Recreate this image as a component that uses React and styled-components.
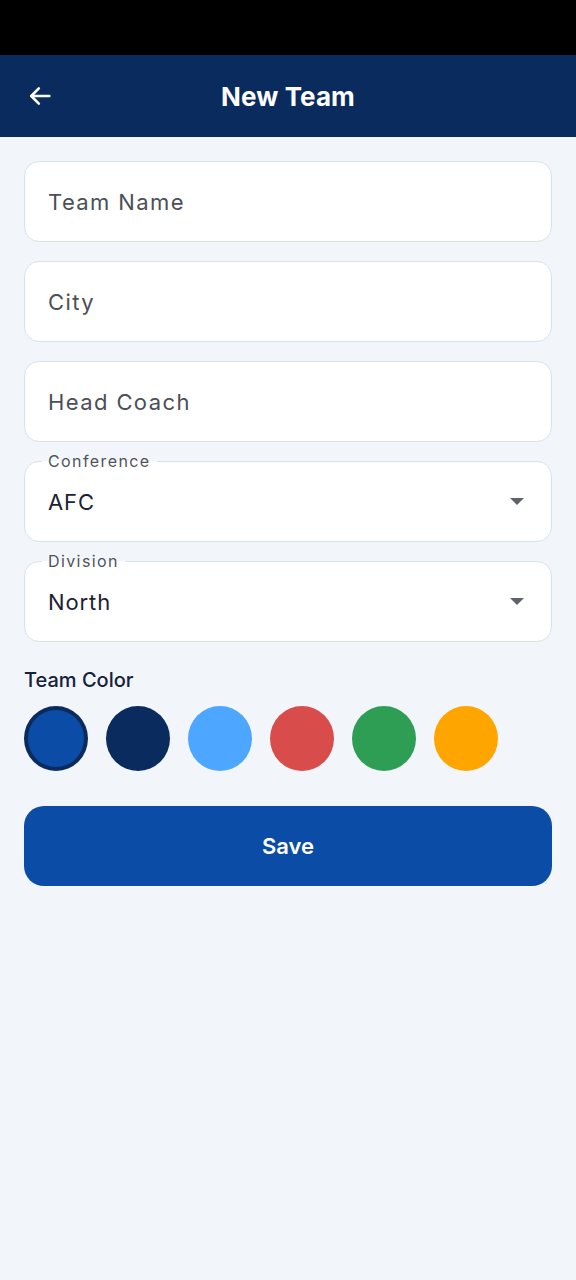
import React, { useState } from "react";
import styled, { createGlobalStyle } from "styled-components";

const GlobalStyle = createGlobalStyle`
  html, body {
    margin: 0;
    padding: 0;
    background: #f2f6fb;
  }
  * {
    box-sizing: border-box;
  }
`;

const Screen = styled.div`
  width: 576px;
  min-height: 1280px;
  background: #f2f6fb;
  font-family: Inter, "Noto Sans", sans-serif;
`;

const StatusBar = styled.div`
  height: 55px;
  background: #000000;
`;

const AppBar = styled.header`
  height: 82px;
  background: #0a2b5e;
  display: grid;
  grid-template-columns: 82px 1fr 82px;
  align-items: center;
`;

const BackButton = styled.button`
  border: none;
  background: none;
  padding: 0 0 0 26px;
  height: 100%;
  display: flex;
  align-items: center;
  color: #ffffff;
  cursor: pointer;
`;

const Title = styled.h1`
  margin: 0;
  text-align: center;
  color: #ffffff;
  font-size: 26px;
  font-weight: 700;
  letter-spacing: 0.1px;
`;

const Form = styled.div`
  padding: 24px 24px 0;
  display: flex;
  flex-direction: column;
  gap: 19px;
`;

const Field = styled.div`
  position: relative;
  height: 81px;
  background: #ffffff;
  border: 1.5px solid #d8e2ec;
  border-radius: 15px;
  display: flex;
  align-items: center;
  padding: 0 24px 0 23px;
`;

const FieldText = styled.span`
  flex: 1;
  font-size: 22px;
  letter-spacing: ${(p) => (p.$placeholder ? "1.4px" : "0.9px")};
  color: ${(p) => (p.$placeholder ? "#4b4f57" : "#1b2233")};
`;

/* floating label sitting on the outline notch */
const FloatLabel = styled.span`
  position: absolute;
  top: -11px;
  left: 17px;
  padding: 0 6px;
  font-size: 16px;
  line-height: 20px;
  letter-spacing: 1.4px;
  color: #4f545c;
  background: linear-gradient(to bottom, #f2f6fb 50%, #ffffff 50%);
`;

const Caret = styled.span`
  width: 0;
  height: 0;
  border-left: 7px solid transparent;
  border-right: 7px solid transparent;
  border-top: 7px solid #5f6368;
  margin-right: 3px;
`;

const SectionLabel = styled.div`
  margin-top: 7px;
  font-size: 20px;
  font-weight: 500;
  color: #16213a;
`;

const Swatches = styled.div`
  display: flex;
  gap: 18px;
  margin-top: -5px;
`;

const Swatch = styled.button`
  width: 64px;
  height: 65px;
  border-radius: 50%;
  padding: 0;
  background: ${(p) => p.$color};
  border: ${(p) => (p.$selected ? "4px solid #0a2b5e" : "none")};
  cursor: pointer;
`;

const SaveButton = styled.button`
  margin-top: 16px;
  height: 80px;
  border: none;
  border-radius: 20px;
  background: #0b4ca6;
  color: #ffffff;
  font-family: Inter, "Noto Sans", sans-serif;
  font-size: 22px;
  font-weight: 600;
  cursor: pointer;
`;

const ArrowLeft = () => (
  <svg width="28" height="28" viewBox="0 0 24 24" fill="none" stroke="currentColor" strokeWidth="2.2" strokeLinecap="round" strokeLinejoin="round">
    <path d="M20 12H4.5" />
    <path d="M11 5.5L4.5 12L11 18.5" />
  </svg>
);

const colors = ["#0b4ca6", "#0a2b5e", "#4da6ff", "#d94c4c", "#2e9e55", "#ffa500"];

export default function App() {
  const [selected, setSelected] = useState(0);

  return (
    <Screen>
      <GlobalStyle />
      <StatusBar />
      <AppBar>
        <BackButton aria-label="Back">
          <ArrowLeft />
        </BackButton>
        <Title>New Team</Title>
        <span />
      </AppBar>
      <Form>
        <Field>
          <FieldText $placeholder>Team Name</FieldText>
        </Field>
        <Field>
          <FieldText $placeholder>City</FieldText>
        </Field>
        <Field>
          <FieldText $placeholder>Head Coach</FieldText>
        </Field>
        <Field>
          <FloatLabel>Conference</FloatLabel>
          <FieldText>AFC</FieldText>
          <Caret />
        </Field>
        <Field>
          <FloatLabel>Division</FloatLabel>
          <FieldText>North</FieldText>
          <Caret />
        </Field>
        <SectionLabel>Team Color</SectionLabel>
        <Swatches>
          {colors.map((c, i) => (
            <Swatch key={c} $color={c} $selected={i === selected} onClick={() => setSelected(i)} />
          ))}
        </Swatches>
        <SaveButton>Save</SaveButton>
      </Form>
    </Screen>
  );
}
